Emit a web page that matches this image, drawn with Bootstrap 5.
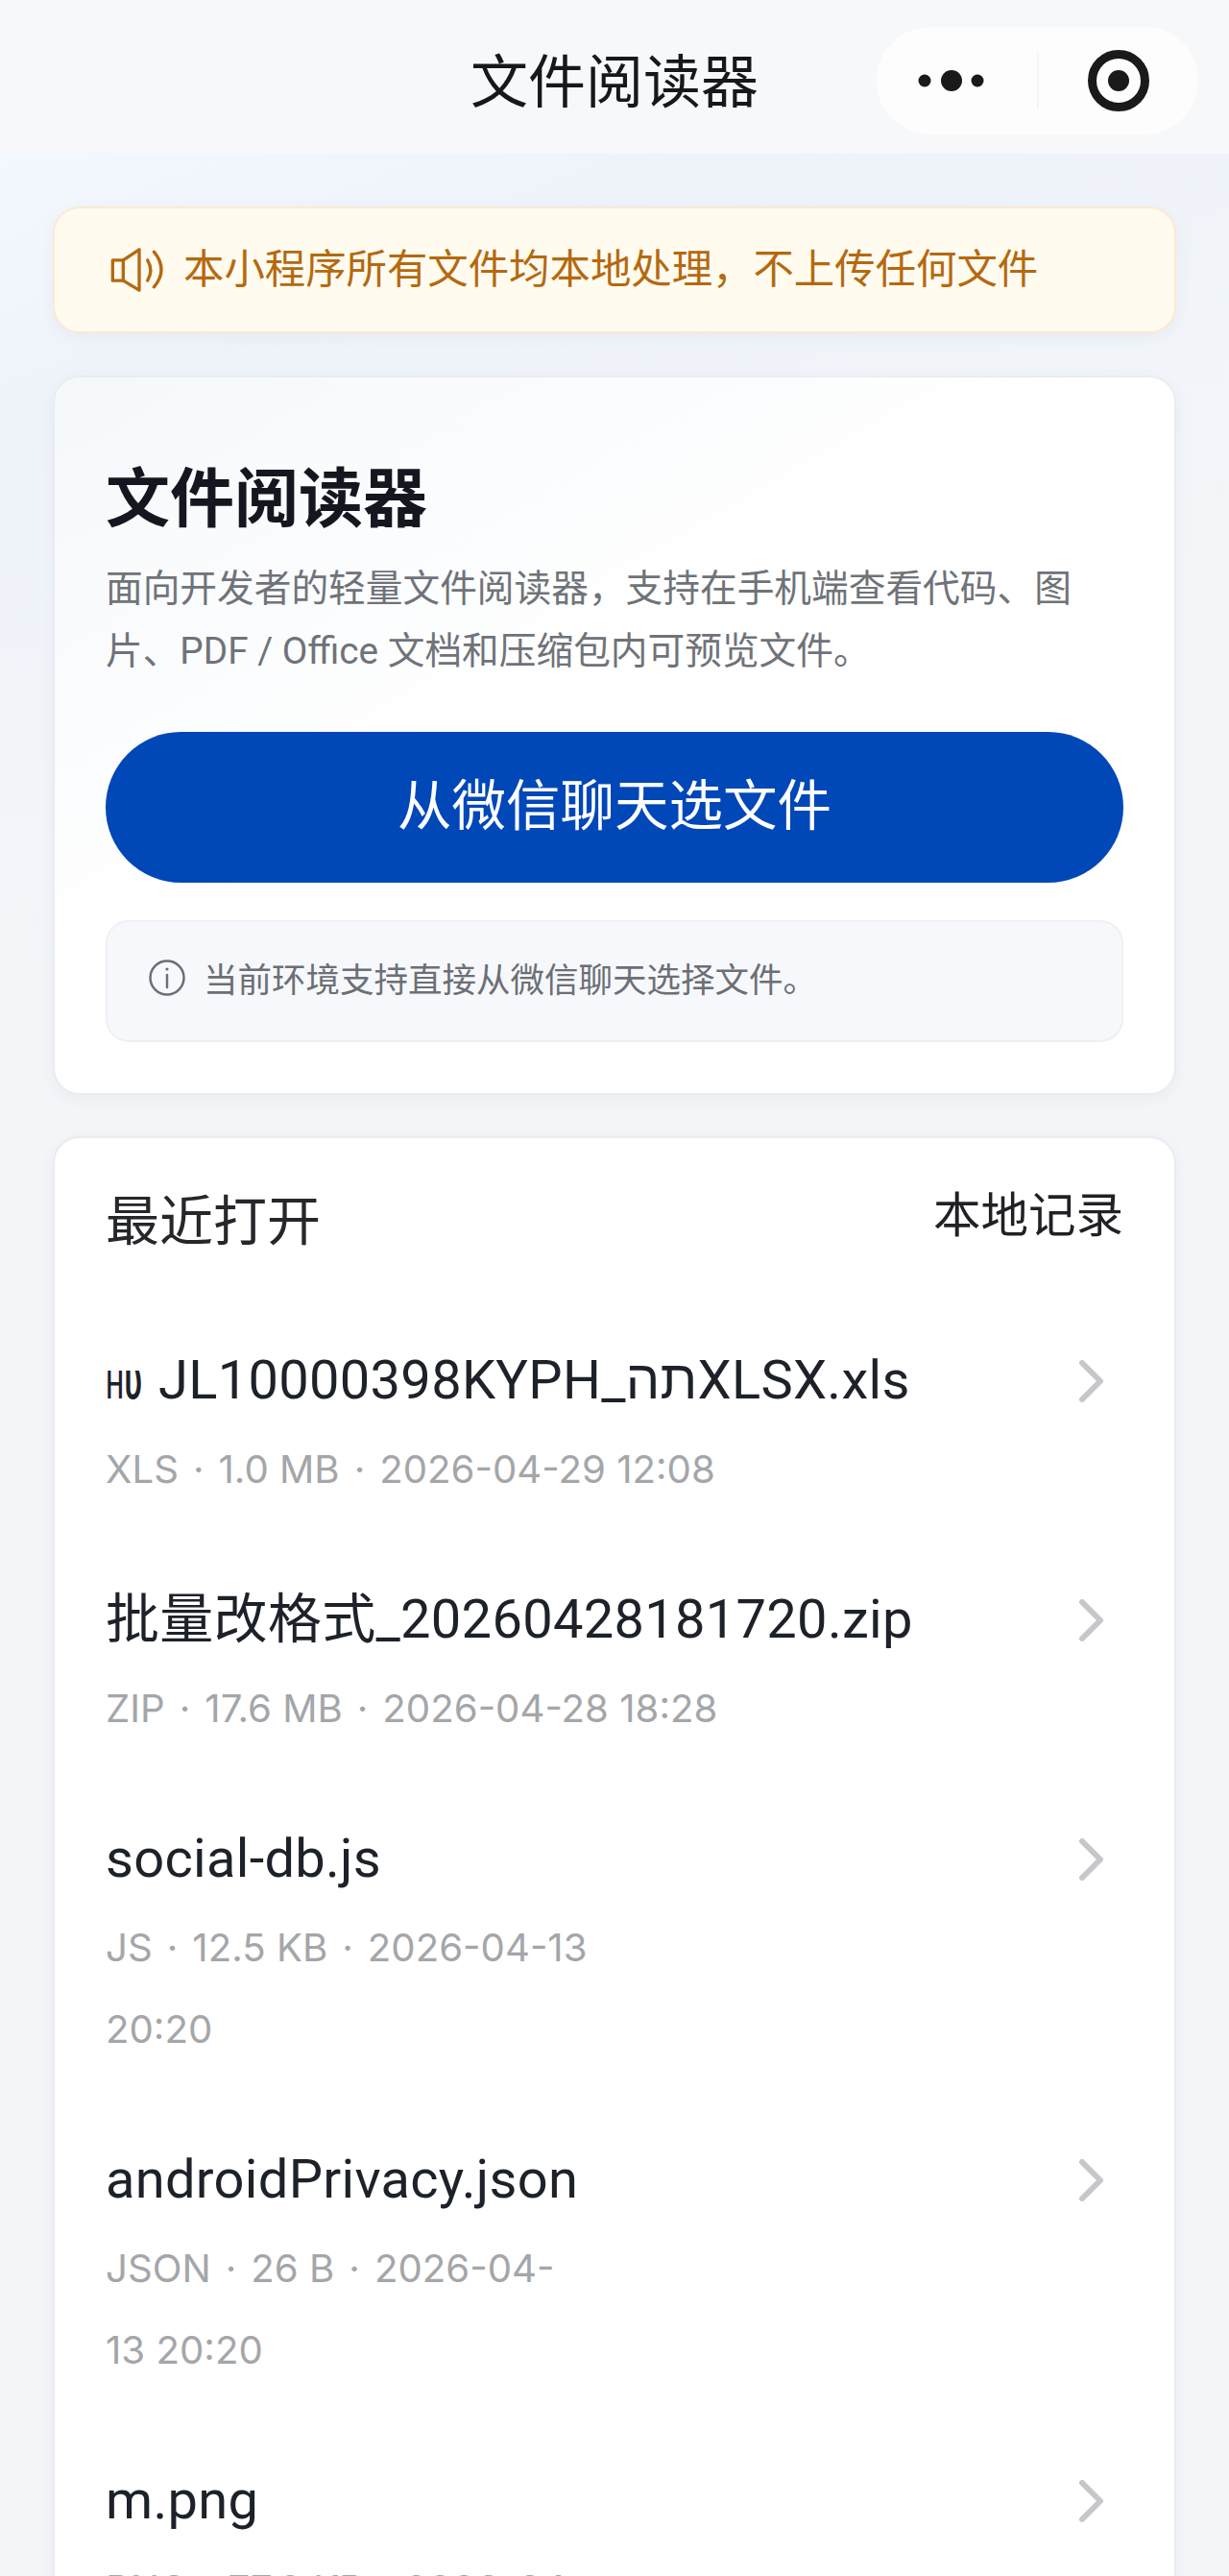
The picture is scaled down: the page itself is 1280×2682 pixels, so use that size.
<!DOCTYPE html>
<html lang="zh-CN">
<head>
  <meta charset="UTF-8" />
  <meta name="viewport" content="width=device-width, initial-scale=1" />
  <title>文件阅读器</title>
  <link href="https://cdn.jsdelivr.net/npm/bootstrap@5.3.3/dist/css/bootstrap.min.css" rel="stylesheet" />
  <style>
    body {
      height: 2682px;
      overflow: hidden;
      font-family: Roboto, "Noto Sans CJK SC", sans-serif;
      color: #1c1f26;
      background: linear-gradient(160deg, #f5f9fe 0, #f3f8fe 170px, #eef3fa 420px, #f3f5f8 1000px);
    }

    /* Top bar */
    .top-bar {
      display: grid;
      grid-template-columns: 1fr auto 1fr;
      align-items: center;
      height: 160px;
      padding-top: 8px;
      background: #f7f8fa;
    }

    .top-title {
      margin-top: 5px;
      font-size: 60px;
      line-height: 1;
      color: #17181a;
    }

    .capsule {
      justify-self: end;
      width: 335px;
      height: 112px;
      margin-right: 32px;
      background: #fdfdfe;
      border-radius: 56px;
    }

    .capsule-cell {
      flex: 1;
    }

    .capsule-line {
      width: 2px;
      height: 58px;
      background: #f3f4f6;
    }

    /* Page content */
    .page-body {
      padding: 55px 55px 0;
    }

    .notice-bar {
      height: 132px;
      padding: 0 58px;
      gap: 16px;
      font-size: 42.4px;
      color: #b5690f;
      background: #fffbef;
      border: 2px solid #fde9d3;
      border-radius: 28px;
      box-shadow: 0 4px 14px rgba(120, 130, 160, .08);
    }

    .panel {
      background: #fff;
      border: 2px solid #e9ecf0;
      border-radius: 28px;
      box-shadow: 0 4px 14px rgba(120, 130, 160, .07);
    }

    .hero-panel {
      margin-top: 44px;
      padding: 87px 53px 53px;
      background: linear-gradient(150deg, #f5f8fb 0, #fff 45%);
    }

    .hero-title {
      margin: 0;
      font-size: 67px;
      font-weight: 700;
      line-height: 80px;
      color: #14171f;
    }

    .hero-desc {
      margin: 20px 0 0;
      font-size: 38.7px;
      line-height: 65px;
      color: #6f7379;
    }

    .pick-btn {
      display: block;
      width: 100%;
      height: 157px;
      margin-top: 52px;
      font-size: 56.5px;
      color: #fff;
      background: #0047b8;
      border: 0;
      border-radius: 79px;
    }

    .env-note {
      height: 127px;
      margin-top: 39px;
      padding: 0 44px 0 42px;
      gap: 18px;
      font-size: 35.5px;
      color: #6b6f76;
      background: #f7f8fb;
      border: 2px solid #eef0f4;
      border-radius: 24px;
    }

    .recent-panel {
      margin-top: 43px;
      padding: 0 53px;
      height: 1600px;
    }

    .recent-head {
      height: 177px;
      padding-bottom: 4px;
    }

    .recent-title {
      font-size: 56px;
      color: #25272b;
    }

    .recent-tag {
      margin-top: -10px;
      font-size: 49.5px;
      color: #1f2125;
    }

    .file-row {
      padding: 39px 0;
      background: transparent;
      border: 0;
    }

    .file-name {
      height: 72px;
      font-size: 56px;
      line-height: 72px;
      letter-spacing: .3px;
      white-space: nowrap;
      color: #1d2129;
    }

    /* the two odd leading glyphs of the first file name are squeezed narrow */
    .name-prefix {
      display: inline-block;
      margin-right: -7px;
      font-weight: 500;
      transform: scaleX(.62);
      transform-origin: left;
    }

    .file-meta {
      margin-top: 14px;
      font-family: Inter, "Noto Sans CJK SC", sans-serif;
      font-size: 40.2px;
      line-height: 85px;
      color: #a4a6a9;
    }

    .meta-dot {
      margin: 0 15px;
    }

    .chevron {
      flex: none;
      margin: 15px 20px 0 0;
    }
  </style>
</head>
<body>

  <!-- Top bar -->
  <div class="top-bar">
    <div></div>
    <div class="top-title">文件阅读器</div>
    <div class="capsule d-flex align-items-center">
      <div class="capsule-cell d-flex justify-content-center">
        <svg width="92" height="24" viewBox="0 0 92 24" fill="#1a1a1c">
          <circle cx="13" cy="12" r="6.5"/>
          <circle cx="41" cy="12" r="11"/>
          <circle cx="68" cy="12" r="6.5"/>
        </svg>
      </div>
      <div class="capsule-line"></div>
      <div class="capsule-cell d-flex justify-content-center">
        <svg width="66" height="66" viewBox="0 0 66 66" fill="none">
          <circle cx="33" cy="33" r="27.5" stroke="#1a1a1c" stroke-width="9"/>
          <circle cx="33" cy="33" r="11" fill="#1a1a1c"/>
        </svg>
      </div>
    </div>
  </div>

  <div class="page-body">

    <!-- Notice -->
    <div class="notice-bar d-flex align-items-center">
      <svg width="60" height="47" viewBox="0 0 180 140" fill="none" stroke="#b5690f" stroke-width="10" stroke-linejoin="round" stroke-linecap="round">
        <path d="M7 38H40L90 5V132L40 102H7Z"/>
        <path d="M40 38V102"/>
        <path d="M116 38Q135 70 116 102"/>
        <path d="M136 12Q182 68 136 122"/>
      </svg>
      <span>本小程序所有文件均本地处理，不上传任何文件</span>
    </div>

    <!-- Intro card -->
    <div class="panel hero-panel">
      <h1 class="hero-title">文件阅读器</h1>
      <p class="hero-desc">面向开发者的轻量文件阅读器，支持在手机端查看代码、图片、PDF / Office 文档和压缩包内可预览文件。</p>
      <button type="button" class="btn pick-btn">从微信聊天选文件</button>
      <div class="env-note d-flex align-items-center">
        <svg class="mb-2" width="40" height="40" viewBox="0 0 40 40" fill="none" stroke="#6b6f76" stroke-width="2.5">
          <circle cx="20" cy="20" r="17.5"/>
          <path d="M20 17V30" stroke-linecap="round"/>
          <circle cx="20" cy="11" r="1.6" fill="#6b6f76" stroke="none"/>
        </svg>
        <span>当前环境支持直接从微信聊天选择文件。</span>
      </div>
    </div>

    <!-- Recent files -->
    <div class="panel recent-panel">
      <div class="recent-head d-flex justify-content-between align-items-center">
        <span class="recent-title">最近打开</span>
        <span class="recent-tag">本地记录</span>
      </div>
      <div class="list-group list-group-flush" id="fileList"></div>
    </div>

  </div>

  <script>
    // meta is split by hand where the narrow column breaks it
    const files = [
      { name: '<span class="name-prefix">ʜυ</span>JL10000398KYPH_תהXLSX.xls', meta: ['XLS', '1.0 MB', '2026-04-29 12:08'] },
      { name: '批量改格式_20260428181720.zip', meta: ['ZIP', '17.6 MB', '2026-04-28 18:28'] },
      { name: 'social-db.js', meta: ['JS', '12.5 KB', '2026-04-13<br>20:20'] },
      { name: 'androidPrivacy.json', meta: ['JSON', '26 B', '2026-04-<br>13 20:20'] },
      { name: 'm.png', meta: ['PNG', '77.9 KB', '2026-04-'] }
    ];

    const fileList = document.getElementById('fileList');
    files.forEach(file => {
      fileList.innerHTML += `
        <div class="list-group-item file-row d-flex justify-content-between align-items-start">
          <div>
            <div class="file-name">${file.name}</div>
            <div class="file-meta">${file.meta.join('<span class="meta-dot">·</span>')}</div>
          </div>
          <svg class="chevron" width="28" height="44" viewBox="0 0 28 44" fill="none" stroke="#c5c7cb" stroke-width="6" stroke-linecap="round" stroke-linejoin="round">
            <path d="M5 3L24 22L5 41"/>
          </svg>
        </div>
      `;
    });
  </script>
  <script src="https://cdn.jsdelivr.net/npm/bootstrap@5.3.3/dist/js/bootstrap.bundle.min.js"></script>
</body>
</html>
